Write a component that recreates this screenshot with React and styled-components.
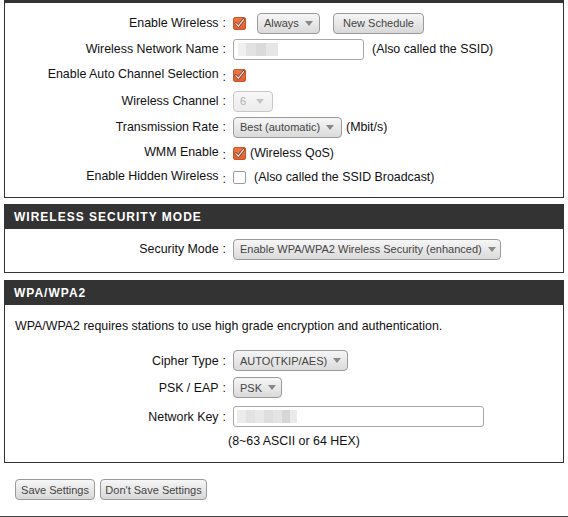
import React from "react";
import styled, { createGlobalStyle } from "styled-components";

const Global = createGlobalStyle`
  html, body { margin: 0; padding: 0; background: #fff; }
  body {
    font-family: "Liberation Sans", Arial, sans-serif;
    font-size: 12.4px;
    color: #111;
    overflow: hidden;
  }
`;

const Page = styled.div`
  width: 568px;
`;

const Inner = styled.div`
  padding: 0 4px;
`;

const Section = styled.section`
  border: 1px solid #333;
  border-top: none;
  margin-top: ${(p) => p.$mt || 0}px;
  background: #fff;
`;

const TopBar = styled.div`
  height: 3px;
  background: #333;
  margin: 0 -1px;
`;

const Header = styled.div`
  height: 25px;
  background: #333;
  color: #fff;
  font-weight: bold;
  font-size: 12px;
  letter-spacing: 1px;
  display: flex;
  align-items: center;
  padding-left: 10px;
  margin: 0 -1px;
`;

const Body = styled.div`
  padding: ${(p) => p.$pad};
`;

const Row = styled.div`
  display: flex;
  align-items: center;
  height: ${(p) => p.$h || 26}px;
`;

const Label = styled.div`
  width: 221px;
  flex: none;
  text-align: right;
  white-space: nowrap;
  margin-right: 7px;
`;

const Colon = styled.span`
  margin-left: 4px;
  vertical-align: ${(p) => (p.$low ? "-3px" : "0")};
`;

const Note = styled.span`
  margin-left: ${(p) => p.$ml || 0}px;
  white-space: nowrap;
`;

const Desc = styled.div`
  padding: 14px 10px 0;
  line-height: 15px;
`;

const Spacer = styled.div`
  height: ${(p) => p.$h}px;
`;

const Controls = styled.div`
  display: flex;
  align-items: center;
`;

const Select = styled.div`
  display: inline-flex;
  align-items: center;
  justify-content: space-between;
  box-sizing: border-box;
  width: ${(p) => p.$w}px;
  height: 21px;
  margin-left: ${(p) => p.$ml || 0}px;
  padding: 0 8px 0 6px;
  border: 1px solid ${(p) => (p.$disabled ? "#c8c8c8" : "#9a9a9a")};
  border-radius: 4px;
  background: ${(p) =>
    p.$disabled
      ? "linear-gradient(#f7f7f7, #ececec)"
      : "linear-gradient(#f6f6f6, #dadada)"};
  color: ${(p) => (p.$disabled ? "#b0b0b0" : "#444")};
  font-size: 11px;
  white-space: nowrap;
`;

const Caret = styled.span`
  width: 0;
  height: 0;
  border-left: 4px solid transparent;
  border-right: 4px solid transparent;
  border-top: 5px solid ${(p) => (p.$disabled ? "#c4c4c4" : "#888")};
  margin-left: 6px;
  flex: none;
`;

const Button = styled.button`
  box-sizing: border-box;
  height: 21px;
  width: ${(p) => p.$w}px;
  margin-left: ${(p) => p.$ml || 0}px;
  padding: 0;
  border: 1px solid #9a9a9a;
  border-radius: 4px;
  background: linear-gradient(#f6f6f6, #d8d8d8);
  color: #444;
  font-family: "Liberation Sans", Arial, sans-serif;
  font-size: 11px;
`;

const TextInput = styled.div`
  box-sizing: border-box;
  width: ${(p) => p.$w}px;
  height: 21px;
  border: 1px solid #a8a8a8;
  border-radius: 3px;
  background: #fff;
  display: flex;
  align-items: center;
  padding-left: ${(p) => p.$pl}px;
`;

const Blur = styled.div`
  width: ${(p) => p.$w}px;
  height: 13px;
  background: ${(p) => p.$bg};
`;

const Box = styled.span`
  box-sizing: border-box;
  display: inline-flex;
  align-items: center;
  justify-content: center;
  width: 13px;
  height: 13px;
  flex: none;
  border-radius: 2px;
  border: 1px solid ${(p) => (p.$on ? "#c9542a" : "#9c9c9c")};
  background: ${(p) => (p.$on ? "linear-gradient(#ee7748, #e0612f)" : "#fff")};
`;

const Check = ({ on }) => (
  <Box $on={on}>
    {on && (
      <svg width="11" height="11" viewBox="0 0 11 11">
        <path d="M1.8 5.6 L4.4 8.2 L9.6 1.6" fill="none" stroke="#6e3420" strokeWidth="2.6" strokeLinecap="round" strokeLinejoin="round" />
        <path d="M1.8 5.6 L4.4 8.2 L9.6 1.6" fill="none" stroke="#f3e6e0" strokeWidth="1.3" strokeLinecap="round" strokeLinejoin="round" />
      </svg>
    )}
  </Box>
);

const Sel = ({ children, w, ml, disabled }) => (
  <Select $w={w} $ml={ml} $disabled={disabled}>
    <span>{children}</span>
    <Caret $disabled={disabled} />
  </Select>
);

const Actions = styled.div`
  display: flex;
  margin-top: 16px;
  padding-left: 11px;
`;

const Rule = styled.div`
  height: 2px;
  background: #444;
  margin-top: 16px;
`;

const F = ({ label, low, children, h }) => (
  <Row $h={h}>
    <Label>
      {label}
      <Colon $low={low}>:</Colon>
    </Label>
    <Controls>{children}</Controls>
  </Row>
);

export default function App() {
  return (
    <Page>
      <Global />
      <Inner>
        <Section>
          <TopBar />
          <Body $pad="7px 0 9px">
            <F label="Enable Wireless">
              <Check on />
              <Sel w={63} ml={11}>Always</Sel>
              <Button $w={91} $ml={13}>New Schedule</Button>
            </F>
            <F label="Wireless Network Name">
              <TextInput $w={131} $pl={4}>
                <Blur $w={40} $bg="linear-gradient(to right, #f0f0f0 0 20%, #e2e2e2 20% 45%, #dadada 45% 70%, #e6e6e6 70% 100%)" />
              </TextInput>
              <Note $ml={8}>(Also called the SSID)</Note>
            </F>
            <F label="Enable Auto Channel Selection" low>
              <Check on />
            </F>
            <F label="Wireless Channel">
              <Sel w={40} disabled>6</Sel>
            </F>
            <F label="Transmission Rate">
              <Sel w={109}>Best (automatic)</Sel>
              <Note $ml={4}>(Mbit/s)</Note>
            </F>
            <F label="WMM Enable" low>
              <Check on />
              <Note $ml={4}>(Wireless QoS)</Note>
            </F>
            <F label="Enable Hidden Wireless" low h={22}>
              <Check />
              <Note $ml={8}>(Also called the SSID Broadcast)</Note>
            </F>
          </Body>
        </Section>

        <Section $mt={6}>
          <Header>WIRELESS SECURITY MODE</Header>
          <Body $pad="7px 0 10px">
            <F label="Security Mode">
              <Sel w={268}>Enable WPA/WPA2 Wireless Security (enhanced)</Sel>
            </F>
          </Body>
        </Section>

        <Section $mt={7}>
          <Header>WPA/WPA2</Header>
          <Body $pad="0 0 12px">
            <Desc>WPA/WPA2 requires stations to use high grade encryption and authentication.</Desc>
            <Spacer $h={13} />
            <F label="Cipher Type" h={27}>
              <Sel w={115}>AUTO(TKIP/AES)</Sel>
            </F>
            <F label="PSK / EAP" h={27}>
              <Sel w={49}>PSK</Sel>
            </F>
            <F label="Network Key" h={31}>
              <TextInput $w={251} $pl={3}>
                <Blur $w={60} $bg="linear-gradient(to right, #ececec 0 15%, #e2e2e2 15% 30%, #e8e8e8 30% 45%, #dedede 45% 60%, #e4e4e4 60% 75%, #d6d6d6 75% 88%, #eaeaea 88% 100%)" />
              </TextInput>
            </F>
            <Row $h={18}>
              <Label />
              <Note $ml={-5}>(8~63 ASCII or 64 HEX)</Note>
            </Row>
          </Body>
        </Section>

        <Actions>
          <Button $w={80}>Save Settings</Button>
          <Button $w={107} $ml={5}>Don't Save Settings</Button>
        </Actions>
      </Inner>
      <Rule />
    </Page>
  );
}
